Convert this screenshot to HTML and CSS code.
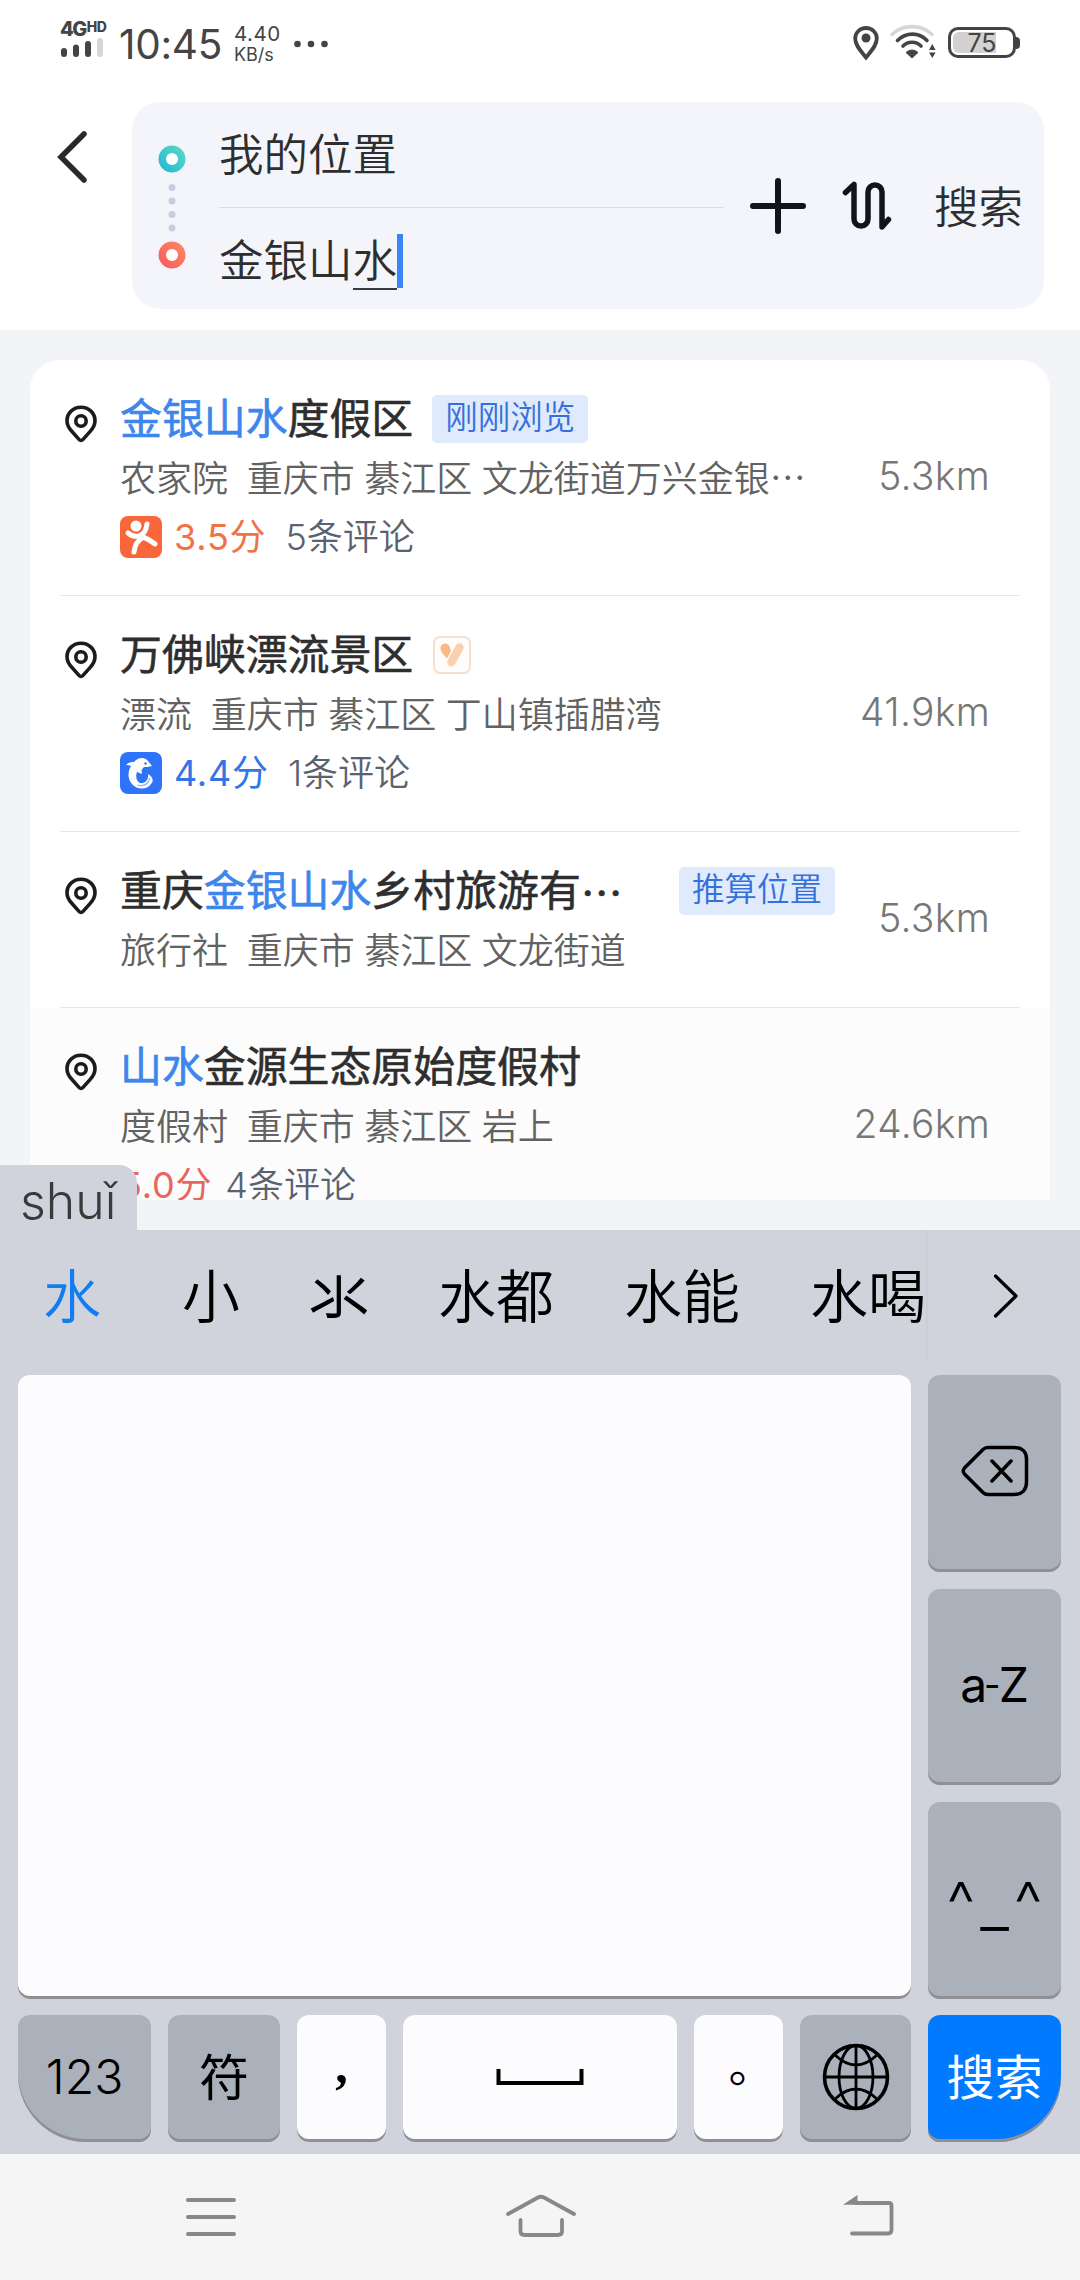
FILE: index.html
```html
<!DOCTYPE html>
<html lang="zh-CN">
<head>
<meta charset="utf-8">
<title>路线搜索</title>
<link rel="stylesheet" href="styles.css">
</head>
<body>
<svg class="defs" aria-hidden="true">
  <symbol id="pin" viewBox="0 0 32 38">
    <path d="M16 2.2C8.200 2.200 2 8.200 2 15.800c0 4.500 2 7.600 5 10.800l7.200 8c1.100 1.200 2.500 1.200 3.600 0l7.200-8c3-3.200 5-6.300 5-10.800C30 8.200 23.800 2.200 16 2.200z" fill="none" stroke="#1c1c1e" stroke-width="3.600"/>
    <circle cx="16" cy="16" r="5.200" fill="none" stroke="#1c1c1e" stroke-width="3.600"/>
  </symbol>
</svg>
<div class="screen">
  <div class="status">
    <div class="signal">
      <div class="net">4G<span>HD</span></div>
      <svg width="44" height="22" viewBox="0 0 44 22"><g stroke-width="6" stroke-linecap="round" stroke="#444"><path d="M4 14V17M16 10.500V17M28 7V17"/><path d="M40 4V17" stroke="#d6d6d6"/></g></svg>
    </div>
    <div class="clock">10:45</div>
    <div class="speed"><div>4.40</div><div class="unit">KB/s</div></div>
    <svg class="more" width="34" height="8" viewBox="0 0 34 8"><g fill="#444"><circle cx="3.500" cy="4" r="3.300"/><circle cx="17" cy="4" r="3.300"/><circle cx="30.500" cy="4" r="3.300"/></g></svg>
    <svg class="loc" width="26" height="36" viewBox="0 0 26 36"><path d="M13 3C7 3 2.200 7.500 2.200 13.500 2.200 20.500 8 26 13 32.500 18 26 23.800 20.500 23.800 13.500 23.800 7.500 19 3 13 3z" fill="none" stroke="#444" stroke-width="3.800"/><circle cx="13" cy="13" r="4.500" fill="#444"/></svg>
    <svg class="wifi" width="48" height="36" viewBox="0 0 48 36"><g fill="none" stroke-linecap="round" stroke-width="3.600"><path d="M3 10.500C14 0 32 0 43 10.500" stroke="#d6d6d6"/><path d="M8.500 16.500C17 8 30 8 38 16.500M14 22C19 17 27 17 32 22" stroke="#444"/></g><path d="M17 28.500Q23 23.500 29 28.500L23 34z" fill="#444" stroke="#444" stroke-linejoin="round"/><path d="M40 26L43.300 20 46.600 26zM40 28.500L43.300 34 46.600 28.500z" fill="#444"/></svg>
    <div class="battery"><div class="level"></div><span>75</span></div>
  </div>

  <div class="header">
    <svg class="back" width="32" height="54" viewBox="0 0 32 54"><path d="M27 4L4 27 27 50" fill="none" stroke="#2a2a2a" stroke-width="5.500" stroke-linecap="round"/></svg>
    <div class="box">
      <svg class="route" width="28" height="124" viewBox="0 0 28 124">
        <defs><linearGradient id="g1" x1="1" y1="0" x2="0" y2="1"><stop offset="0" stop-color="#62d9c4"/><stop offset="1" stop-color="#1bb8d8"/></linearGradient>
        <linearGradient id="g2" x1="1" y1="0" x2="0" y2="1"><stop offset="0" stop-color="#fb8a68"/><stop offset="1" stop-color="#f95a5a"/></linearGradient></defs>
        <circle cx="14" cy="14" r="13.500" fill="url(#g1)"/><circle cx="14" cy="14" r="6" fill="#fff"/>
        <g fill="#c9cbdf"><circle cx="14" cy="42.500" r="3.500"/><circle cx="14" cy="56" r="3.500"/><circle cx="14" cy="69.500" r="3.500"/><circle cx="14" cy="83" r="3.500"/></g>
        <circle cx="14" cy="110" r="13.500" fill="url(#g2)"/><circle cx="14" cy="110" r="6" fill="#fff"/>
      </svg>
      <div class="fields">
        <div class="field from">我的位置</div>
        <div class="field to">金银山<span class="compose">水</span><i class="caret"></i></div>
      </div>
      <svg class="plus" width="56" height="56" viewBox="0 0 56 56"><path d="M28 3V53M3 28H53" stroke="#12131c" stroke-width="6" stroke-linecap="round"/></svg>
      <svg class="swap" width="50" height="52" viewBox="0 0 50 52"><path d="M3.500 12.500L12 4.500V39a7 7 0 0 0 14 0V12a7 7 0 0 1 14 0V47L46.500 39.500" fill="none" stroke="#12131c" stroke-width="5.500" stroke-linecap="round" stroke-linejoin="round"/></svg>
      <div class="go">搜索</div>
    </div>
  </div>

  <div class="results">
    <div class="card">
      <div class="row">
        <svg class="pin"><use href="#pin"/></svg>
        <div class="info">
          <div class="title"><b>金银山水</b>度假区<span class="tag">刚刚浏览</span></div>
          <div class="sub">农家院&nbsp; 重庆市 綦江区 文龙街道万兴金银<span class="dots">⋯</span></div>
          <div class="rate orange">
            <svg width="42" height="42" viewBox="0 0 42 42"><rect width="42" height="42" rx="8" fill="#f9663a"/><circle cx="16" cy="10" r="5.500" fill="#fff"/><path d="M8 17Q14 22 20 19.500Q26 17 27 8M20 20Q27 22 35 28M22 22Q15 26 14 36" fill="none" stroke="#fff" stroke-width="5" stroke-linecap="round"/></svg>
            <span class="score">3.5分</span><span class="count">5条评论</span>
          </div>
        </div>
        <div class="dist">5.3km</div>
      </div>
      <div class="row">
        <svg class="pin"><use href="#pin"/></svg>
        <div class="info">
          <div class="title">万佛峡漂流景区<svg class="vip" width="38" height="38" viewBox="0 0 38 38"><rect x="1" y="1" width="36" height="36" rx="6" fill="#fffdfb" stroke="#f7dfcd" stroke-width="2"/><path d="M7.500 12C7.500 7 15 5.500 16.500 10.500L18 15 14 22.500C11 19 7.500 16 7.500 12z" fill="#fbb98a"/><path d="M26.500 11.500L18.500 26" stroke="#fccfb0" stroke-width="8.500" stroke-linecap="round"/></svg></div>
          <div class="sub">漂流&nbsp; 重庆市 綦江区 丁山镇插腊湾</div>
          <div class="rate blue">
            <svg width="42" height="42" viewBox="0 0 42 42"><rect width="42" height="42" rx="8" fill="#2f74f8"/><path d="M6 13C9 10 12 10 14 10 18 5 25 5 28 9L32 14C29 15 26 15 24 15 22 17 21 18 22 22 19 21 18 20 17 20 15 25 17 30 20 31 25 32 29 28 28 22 33 25 34 29 31 32 27 38 17 38 12 32 7 26 8 19 11 14 9 13 8 13 6 13z" fill="#fff"/><circle cx="25.500" cy="11.500" r="1.200" fill="#2f74f8"/><path d="M17 33Q27 36 30 26" fill="none" stroke="#8db2fb" stroke-width="1.200"/></svg>
            <span class="score">4.4分</span><span class="count">1条评论</span>
          </div>
        </div>
        <div class="dist">41.9km</div>
      </div>
      <div class="row short">
        <svg class="pin"><use href="#pin"/></svg>
        <div class="info">
          <div class="title">重庆<b>金银山水</b>乡村旅游有<span class="dots">⋯</span><span class="tag end">推算位置</span></div>
          <div class="sub">旅行社&nbsp; 重庆市 綦江区 文龙街道</div>
        </div>
        <div class="dist">5.3km</div>
      </div>
      <div class="row last">
        <svg class="pin"><use href="#pin"/></svg>
        <div class="info">
          <div class="title"><b>山水</b>金源生态原始度假村</div>
          <div class="sub">度假村&nbsp; 重庆市 綦江区 岩上</div>
          <div class="rate red"><span class="score">5.0分</span><span class="count">4条评论</span></div>
        </div>
        <div class="dist">24.6km</div>
      </div>
    </div>
    <div class="pinyin">shuǐ</div>
  </div>

  <div class="keyboard">
    <div class="cands">
      <div class="list"><span class="sel">水</span><span>小</span><span class="tall">氺</span><span>水都</span><span>水能</span><span>水喝</span></div>
      <svg width="26" height="46" viewBox="0 0 26 46"><path d="M2.500 3L23 23 2.500 43" fill="none" stroke="#000" stroke-width="3.200" stroke-linejoin="round" stroke-linecap="round"/></svg>
    </div>
    <div class="pad">
      <div class="key white write"></div>
      <div class="side">
        <div class="key"><svg width="68" height="52" viewBox="0 0 68 52"><path d="M27 2.500H53C61 2.500 65.500 7 65.500 14V37C65.500 45 61 49.500 53 49.500H27C25 49.500 23.500 49 22 47.500L3.500 29Q1 26 3.500 23L22 4.500Q24 2.500 27 2.500zM31 16L50 36M50 16L31 36" fill="none" stroke="#000" stroke-width="3.500" stroke-linecap="round"/></svg></div>
        <div class="key az">a<span>-</span>Z</div>
        <div class="key face"><span>^</span><span>_</span><span>^</span></div>
      </div>
    </div>
    <div class="bottom">
      <div class="key num">123</div>
      <div class="key sym">符</div>
      <div class="key white comma">,</div>
      <div class="key white"><svg width="88" height="18" viewBox="0 0 88 18"><path d="M2.500 1V15H85.500V1" fill="none" stroke="#000" stroke-width="4"/></svg></div>
      <div class="key white"><span class="stop">。</span></div>
      <div class="key"><svg width="68" height="68" viewBox="0 0 68 68"><g fill="none" stroke="#000" stroke-width="2.800"><circle cx="34" cy="34" r="31.500" stroke-width="3.600"/><ellipse cx="34" cy="34" rx="17" ry="31.500"/><path d="M34 2V66M2 34H66M13 12Q34 32 55 12M13 56Q34 36 55 56"/></g></svg></div>
      <div class="key enter">搜索</div>
    </div>
  </div>

  <div class="nav">
    <svg width="52" height="44" viewBox="0 0 52 44"><path d="M3 5H49M3 22H49M3 39H49" stroke="#888" stroke-width="4" stroke-linecap="round"/></svg>
    <svg width="72" height="44" viewBox="0 0 72 44"><path d="M3 21L33 4.500Q36 3 39 4.500L69 21M15.500 27V38Q15.500 42 19.500 42H53Q57 42 57 38V27" fill="none" stroke="#888" stroke-width="3.800" stroke-linecap="round"/></svg>
    <svg width="52" height="44" viewBox="0 0 52 44"><path d="M14 11H47Q49.500 11 49.500 14V38Q49.500 41.500 46 41.500H10" fill="none" stroke="#888" stroke-width="3.800" stroke-linecap="round"/><path d="M1 12.800L15.500 3V12.800z" fill="#888"/></svg>
  </div>
</div>
</body>
</html>
```
FILE: styles.css
```css
* { box-sizing: border-box; }
body { margin: 0; font-family: Inter, "Noto Sans CJK SC", sans-serif; font-weight: 350; color: #2e2e2e; }
svg { display: block; flex: none; }
.defs { display: none; }
.screen { width: 1080px; height: 2280px; overflow: hidden; display: flex; flex-direction: column; background: #fff; }

/* status bar */
.status { height: 102px; display: flex; align-items: flex-start; padding-left: 60px; color: #444; }
.signal { width: 46px; padding-top: 19px; }
.signal svg { margin-top: -3px; }
.net { display: flex; font-weight: 800; font-size: 20px; line-height: 21px; letter-spacing: -1.500px; white-space: nowrap; }
.net span { font-size: 14px; line-height: 16px; letter-spacing: -0.500px; margin-left: 1px; }
.clock { width: 128px; padding: 21px 0 0 13px; font-size: 40.500px; line-height: 48px; font-weight: 400; letter-spacing: -0.300px; }
.speed { width: 60px; padding-top: 22px; font-size: 20.500px; line-height: 23px; font-weight: 400; letter-spacing: 0.500px; }
.speed .unit { font-size: 18px; line-height: 19px; letter-spacing: 0; }
.more { margin-top: 40px; }
.loc { margin: 25px 0 0 525px; }
.wifi { margin: 24px 0 0 10px; }
.battery { position: relative; margin: 27px 0 0 11px; width: 68px; height: 31px; border: 3px solid #444; border-radius: 10px; padding: 2px; }
.battery::after { content: ""; position: absolute; right: -7px; top: 7px; width: 4px; height: 12px; border-radius: 0 4px 4px 0; background: #444; }
.level { width: 43px; height: 21px; border-radius: 6px 0 0 6px; background: #d2d2d2; }
.battery span { position: absolute; inset: 0; text-align: center; font-size: 25px; line-height: 26px; font-weight: 400; }

/* route header */
.header { height: 228px; display: flex; align-items: flex-start; padding-left: 57px; }
.back { margin-top: 28px; }
.box { margin-left: 43px; width: 912px; height: 207px; border-radius: 28px; background: #f4f5fb; display: flex; align-items: center; }
.route { margin: 2px 0 0 26px; }
.fields { align-self: flex-start; margin-left: 33px; width: 505px; }
.field { height: 106px; font-size: 44.500px; line-height: 100px; white-space: nowrap; display: flex; align-items: center; }
.from { border-bottom: 1px solid #dcdde3; }
.to { height: 105px; }
.compose { height: 55px; line-height: 53px; border-bottom: 2px solid #3a3a3a; margin-top: 3px; }
.caret { width: 6px; height: 54px; background: #3c83f7; }
.plus { margin-left: 26px; }
.swap { margin-left: 36px; }
.go { margin: -2px 0 0 42px; font-size: 44.500px; }

/* result list */
.results { position: relative; height: 900px; background: #f3f4f8; padding: 30px 30px 0; }
.card { height: 840px; background: #fff; border-radius: 30px 30px 0 0; overflow: hidden; }
.row { position: relative; height: 236px; padding: 34px 60px 0 35px; display: flex; }
.row::after { content: ""; position: absolute; left: 30px; right: 30px; bottom: 0; height: 1px; background: #e6e6e8; }
.short { height: 176px; }
.last { background: #fcfcfc; }
.pin { width: 32px; height: 38px; margin-top: 11px; }
.info { margin-left: 23px; width: 655px; flex: none; }
.title { height: 49px; display: flex; align-items: center; font-size: 41.900px; line-height: 49px; font-weight: 400; -webkit-text-stroke: 0.600px; white-space: nowrap; }
.title b { font-weight: 400; color: #3d86ec; }
.tag { margin-left: 19px; padding: 0 13px; height: 48px; line-height: 46px; border-radius: 5px; font-size: 32.500px; font-weight: 350; -webkit-text-stroke: 0; color: #3670dd; background: #dfeafc; }
.tag.end { margin-left: auto; margin-right: -60px; }
.vip { margin-left: 20px; }
.dots { font-family: "Noto Sans CJK SC", sans-serif; line-height: 0; }
.sub { margin-top: 10px; height: 52px; line-height: 52px; font-size: 36px; color: #626262; word-spacing: -0.700px; white-space: nowrap; }
.rate { margin-top: 11px; height: 42px; display: flex; align-items: center; font-size: 36px; line-height: 42px; white-space: nowrap; }
.rate svg { margin-right: 12px; }
.score { font-weight: 400; letter-spacing: 0.800px; }
.count { margin-left: 19px; color: #5a6270; }
.orange { color: #f07347; }
.blue { color: #3674e6; }
.red { color: #e8665b; }
.red .count { margin-left: 13px; }
.dist { flex: 1; align-self: center; text-align: right; margin-top: -38px; font-size: 39px; line-height: 48px; letter-spacing: 0.300px; color: #777; white-space: nowrap; }
.pinyin { position: absolute; left: 0; bottom: 0; width: 137px; height: 65px; padding-left: 20px; background: #d0d3db; border-radius: 0 18px 0 0; font-size: 50px; line-height: 73px; color: #3a3a3a; }

/* handwriting keyboard */
.keyboard { height: 924px; background: #d0d3db; color: #000; }
.cands { height: 145px; display: flex; align-items: center; }
.list { width: 928px; height: 129px; margin-top: -16px; padding: 0 0 4px 43px; display: flex; align-items: center; gap: 70px; overflow: hidden; font-size: 58px; white-space: nowrap; border-right: 2px solid #cbced6; }
.list .sel { color: #137cf0; margin-right: 11px; }
.list .tall { transform: scale(1.060, 1.200); }
.cands svg { margin: -13px 0 0 65px; }
.pad { height: 624px; padding: 0 19px 0 18px; display: flex; gap: 17px; }
.key { height: 127px; display: flex; align-items: center; justify-content: center; background: #abb1bb; border-radius: 12px; box-shadow: inset 0 -3px 0 #8f9096; }
.white { background: #fcfcfe; }
.write { width: 893px; height: 624px; }
.side { width: 133px; display: grid; grid-template-rows: repeat(3, 1fr); gap: 17px; }
.side .key { height: auto; padding-bottom: 4px; }
.az { font-size: 48px; font-weight: 400; }
.az span { font-size: 36px; margin: 0 -2px 0 -3px; }
.face { font-size: 64px; font-weight: 300; gap: 5px; }
.side .face { padding: 6px 0 0; }
.bottom { height: 127px; margin: 16px 19px 0 18px; display: grid; grid-template-columns: 133px 112px 89px 274px 89px 111px 133px; column-gap: 17px; }
.bottom .key { padding-bottom: 4px; }
.num { font-size: 48px; border-bottom-left-radius: 68px; }
.bottom .sym { padding-bottom: 10px; font-size: 50px; font-weight: 400; }
.bottom .comma { padding-bottom: 28px; font: bold 50px/50px "Liberation Serif", serif; }
.stop { font-size: 46px; line-height: 46px; transform: translate(13px, -12px); }
.bottom .enter { padding-bottom: 10px; font-size: 48px; font-weight: 400; color: #fff; background: #027aff; border-bottom-right-radius: 65px; }

/* system navigation */
.nav { height: 126px; background: #f5f5f5; display: flex; align-items: flex-start; padding: 41px 0 0 185px; }
.nav svg + svg { margin-left: 268px; }
.nav svg:nth-child(2) { margin-top: -2px; }
.nav svg:nth-child(3) { margin-top: -3px; margin-left: 265px; }
```
